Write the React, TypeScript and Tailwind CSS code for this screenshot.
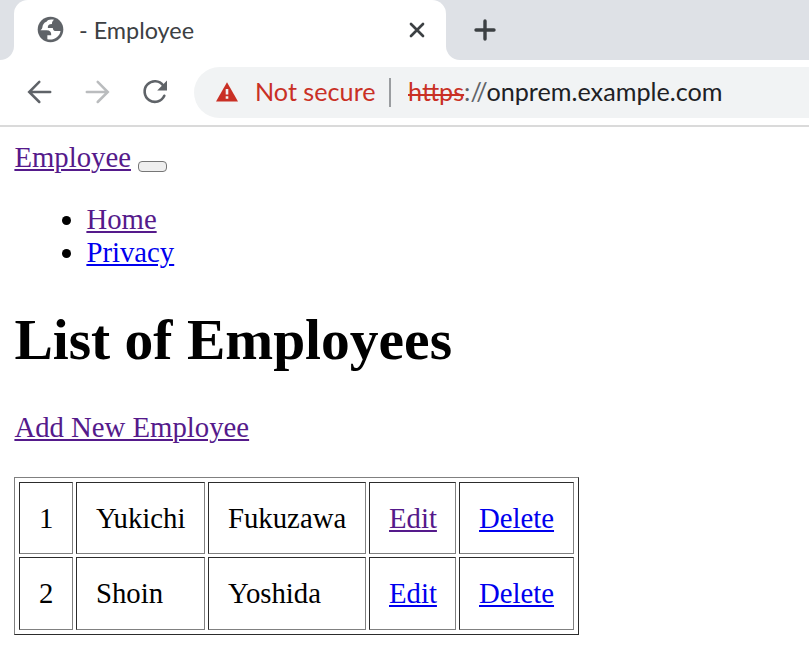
import React from "react";

const visited = "text-[#551a8b]";
const unvisited = "text-[#0000ee]";

function Link({ seen, children }: { seen?: boolean; children: React.ReactNode }) {
  return (
    <a href="#" className={`underline decoration-2 underline-offset-2 ${seen ? visited : unvisited}`}>
      {children}
    </a>
  );
}

function TabStrip() {
  return (
    <div className="flex h-[60px] bg-white text-[#3c4043]">
      <div className="w-[14px] rounded-br-[14px] bg-[#dee1e6]" />
      <div className="w-[432px] bg-[#dee1e6]">
        <div className="flex h-full items-center rounded-t-[14px] bg-white">
          <svg className="-mt-px ml-[22px] h-[29px] w-[29px] shrink-0" viewBox="0 0 24 24">
            <circle cx="12" cy="12" r="10.6" fill="#5f6368" />
            <path d="M3.7 12.6H8.8C11.4 12.6 12.8 14 12.6 16.8H9.4V20C13.8 21.4 19.4 18.8 20.3 13.3H16.8C14.7 13.3 14 12.3 13.9 10.7H9.8C9.6 8.5 10.6 7.5 13.2 7.5C13.2 5.9 13.8 4.7 15 4C11.8 3.1 9.8 3.9 8.7 5.5C6.6 6.2 5.4 8 5.3 10.2C5.2 11.2 4.6 12 3.7 12.6Z" fill="white" />
          </svg>
          <span className="ml-[14px] mt-[2px] w-[300px] font-[Lato,sans-serif] text-[23.4px] leading-none">- Employee</span>
          <svg className="ml-[30px] h-4 w-4" viewBox="0 0 16 16" fill="none" stroke="#3c4043" strokeWidth="2.7" strokeLinecap="round">
            <path d="M2 2l12 12M14 2L2 14" />
          </svg>
        </div>
      </div>
      <div className="flex flex-1 items-center rounded-bl-[14px] bg-[#dee1e6]">
        <svg className="ml-7 h-[22px] w-[22px]" viewBox="0 0 22 22" stroke="#3c4043" strokeWidth="3.4" strokeLinecap="round">
          <path d="M11 2v18M2 11h18" />
        </svg>
      </div>
    </div>
  );
}

function Toolbar() {
  return (
    <div className="flex h-[67px] items-start border-b-2 border-[#dadada] bg-white pt-[7px]">
      <div className="flex h-[50px] w-[194px] shrink-0 items-center">
        <svg className="ml-[27px] h-6 w-[25px]" viewBox="0 0 25 24" fill="none" stroke="#5f6368" strokeWidth="2.5" strokeLinecap="round">
          <path d="M12.3 1.9L2.2 12l10.1 10M2.7 12h20.5" />
        </svg>
        <svg className="ml-[33px] h-6 w-[25px]" viewBox="0 0 25 24" fill="none" stroke="#babcbe" strokeWidth="2.5" strokeLinecap="round">
          <path d="M12.7 1.9L22.8 12 12.7 22M22.3 12H1.8" />
        </svg>
        <svg className="ml-8 h-[26px] w-[26px]" viewBox="0 0 26 26" fill="none">
          <path d="M21.2 6.4A10.3 10.3 0 1 0 22.3 16.8" stroke="#5f6368" strokeWidth="2.6" strokeLinecap="round" />
          <path d="M25 1.6v9.8H15.2z" fill="#5f6368" />
        </svg>
      </div>
      <div className="flex h-[51px] flex-1 items-center rounded-l-full bg-[#f1f3f4] pb-px font-[Lato,sans-serif] text-[25.2px] leading-none">
        <svg className="ml-[21px] h-5 w-6 shrink-0" viewBox="0 0 24 20">
          <path d="M12 .2L23 19.5H1z" fill="#c93025" />
          <path d="M10.7 7h2.6v5.6h-2.6zM10.7 14.2h2.6v2.6h-2.6z" fill="#f1f3f4" />
        </svg>
        <span className="ml-4 w-[134px] whitespace-nowrap text-[#c93025]">Not secure</span>
        <span className="h-[29px] w-[2px] bg-[#9a9da0]" />
        <span className="ml-[17px] whitespace-nowrap text-[#202124]">
          <span className="text-[#c93025] underline decoration-[1.5px] underline-offset-[-7px] [text-decoration-skip-ink:none]">https</span>
          <span className="text-[#5f6368]">://</span>onprem.example.com
        </span>
      </div>
    </div>
  );
}

const employees = [
  { id: 1, first: "Yukichi", last: "Fukuzawa", editSeen: true, height: "h-[72px]", pad: "pt-px" },
  { id: 2, first: "Shoin", last: "Yoshida", editSeen: false, height: "h-[73px]", pad: "pt-0" },
];

const cell = "border border-t-[#2c2c2c] border-l-[#2c2c2c] border-b-[#808080] border-r-[#808080] px-[19px] pb-0 font-normal";

export default function App() {
  return (
    <div className="h-[670px] w-[809px] overflow-hidden bg-white">
      <TabStrip />
      <Toolbar />
      <main className="px-[14.4px] pt-[14px] font-['Liberation_Serif',serif] text-[28.75px] leading-[33px] text-black">
        <nav>
          <div className="flex h-[33px]">
            <Link seen>Employee</Link>
            <button aria-label="Toggle navigation" className="ml-[7px] mt-[20px] h-[11px] w-[29px] rounded-[4px] border border-[#767676] bg-[#efefef]" />
          </div>
          <ul className="mt-[29px] list-disc pl-[72px]">
            <li><Link seen>Home</Link></li>
            <li><Link>Privacy</Link></li>
          </ul>
        </nav>
        <h1 className="mt-[38px] text-[57.5px] font-bold leading-[66px]">List of Employees</h1>
        <p className="mt-[38px]"><Link seen>Add New Employee</Link></p>
        <table className="-ml-[0.4px] mt-[33px] h-[158px] w-[565px] table-fixed border-separate border-spacing-[3px] border border-t-[#808080] border-l-[#808080] border-b-[#2c2c2c] border-r-[#2c2c2c] p-px">
          <colgroup>
            <col className="w-[54px]" />
            <col className="w-[129px]" />
            <col className="w-[158px]" />
            <col className="w-[87px]" />
            <col className="w-[115px]" />
          </colgroup>
          <tbody>
            {employees.map((e) => (
              <tr key={e.id} className={e.height}>
                <td className={`${cell} ${e.pad}`}>{e.id}</td>
                <td className={`${cell} ${e.pad}`}>{e.first}</td>
                <td className={`${cell} ${e.pad}`}>{e.last}</td>
                <td className={`${cell} ${e.pad}`}><Link seen={e.editSeen}>Edit</Link></td>
                <td className={`${cell} ${e.pad}`}><Link>Delete</Link></td>
              </tr>
            ))}
          </tbody>
        </table>
      </main>
    </div>
  );
}
